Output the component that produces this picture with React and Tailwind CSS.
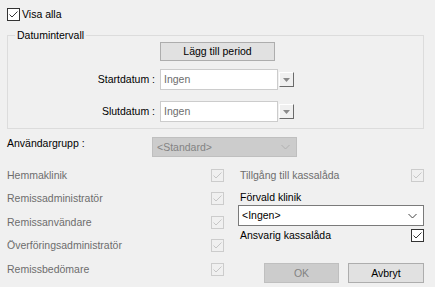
import React from 'react';

const Check = ({ disabled }) => (
  <span
    className={
      'flex h-[13px] w-[13px] shrink-0 items-center justify-center border ' +
      (disabled ? 'border-[#cccccc] bg-[#f0f0f0]' : 'border-[#333333] bg-white')
    }
  >
    <svg width="11" height="11" viewBox="0 0 11 11">
      <polyline
        points="1.5,5.5 4,8 9.5,2.5"
        fill="none"
        stroke={disabled ? '#c6c6c6' : '#333333'}
        strokeWidth="1"
      />
    </svg>
  </span>
);

const Chevron = ({ color }) => (
  <svg width="9" height="6" viewBox="0 0 9 6">
    <polyline points="0.5,1 4.5,5 8.5,1" fill="none" stroke={color} strokeWidth="1" />
  </svg>
);

const DropButton = () => (
  <span className="ml-[1px] mt-[3px] flex h-[15px] w-[15px] items-center justify-center border-t border-l border-t-white border-l-white border-r border-b border-r-[#6a6a6a] border-b-[#6a6a6a] bg-[#f0f0f0]">
    <svg width="7" height="4" viewBox="0 0 7 4">
      <polygon points="0,0 7,0 3.5,4" fill="#8a8a8a" />
    </svg>
  </span>
);

const DateRow = ({ label, className }) => (
  <div className={'flex items-start ' + className}>
    <span className="w-[147px] text-right leading-[20px]">{label}</span>
    <span className="ml-[5px] flex h-[21px] w-[118px] items-center border border-[#cccccc] bg-white pl-[3px] text-[#6d6d6d]">
      Ingen
    </span>
    <DropButton />
  </div>
);

const LeftRow = ({ label, className }) => (
  <div className={'flex h-[13px] items-center justify-between ' + className}>
    <span className="text-[#6d6d6d]">{label}</span>
    <Check disabled />
  </div>
);

export default function App() {
  return (
    <div className="h-[287px] w-[435px] overflow-hidden bg-[#f0f0f0] font-['Liberation_Sans',Arial,sans-serif] text-[10.5px] leading-[13px] text-black">
      <div className="flex items-center gap-[2px] pl-[7px] pt-[8px]">
        <Check />
        <span>Visa alla</span>
      </div>

      <div className="relative ml-[7px] mt-[14px] h-[94px] w-[417px] border border-[#dcdcdc]">
        <span className="absolute -top-[8px] left-[7px] bg-[#f0f0f0] px-[2px] leading-[14px]">Datumintervall</span>
        <div className="ml-[152px] mt-[6px] flex h-[19px] w-[115px] items-center justify-center border border-[#adadad] bg-[#e1e1e1]">
          Lägg till period
        </div>
        <DateRow label="Startdatum :" className="mt-[8px]" />
        <DateRow label="Slutdatum :" className="mt-[11px]" />
      </div>

      <div className="mt-[8px] flex items-start">
        <span className="w-[152px] pl-[7px]">Användargrupp :</span>
        <span className="flex h-[20px] w-[145px] items-center justify-between border border-[#bfbfbf] bg-[#cccccc] pl-[4px] pr-[6px] text-[#838383]">
          &lt;Standard&gt;
          <Chevron color="#b0b0b0" />
        </span>
      </div>

      <div className="mt-[12px] flex">
        <div className="w-[224px] pl-[7px]">
          <LeftRow label="Hemmaklinik" />
          <LeftRow label="Remissadministratör" className="mt-[10px]" />
          <LeftRow label="Remissanvändare" className="mt-[11px]" />
          <LeftRow label="Överföringsadministratör" className="mt-[10px]" />
          <LeftRow label="Remissbedömare" className="mt-[11px]" />
        </div>

        <div className="ml-[14px] w-[186px]">
          <div className="flex h-[13px] items-center justify-between">
            <span className="pl-[2px] text-[#6d6d6d]">Tillgång till kassalåda</span>
            <Check disabled />
          </div>
          <div className="mt-[8px] pl-[2px] leading-[14px]">Förvald klinik</div>
          <div className="mt-[1px] flex h-[21px] items-center justify-between border border-[#7a7a7a] bg-white pl-[3px] pr-[6px]">
            <span>&lt;Ingen&gt;</span>
            <Chevron color="#444444" />
          </div>
          <div className="mt-[3px] flex h-[13px] items-center justify-between">
            <span className="pl-[2px]">Ansvarig kassalåda</span>
            <Check />
          </div>
          <div className="mt-[21px] flex justify-end gap-[9px]">
            <span className="flex h-[20px] w-[75px] items-center justify-center border border-[#bfbfbf] bg-[#cccccc] text-[#838383]">
              OK
            </span>
            <span className="flex h-[20px] w-[76px] items-center justify-center border border-[#adadad] bg-[#e1e1e1]">
              Avbryt
            </span>
          </div>
        </div>
      </div>
    </div>
  );
}
